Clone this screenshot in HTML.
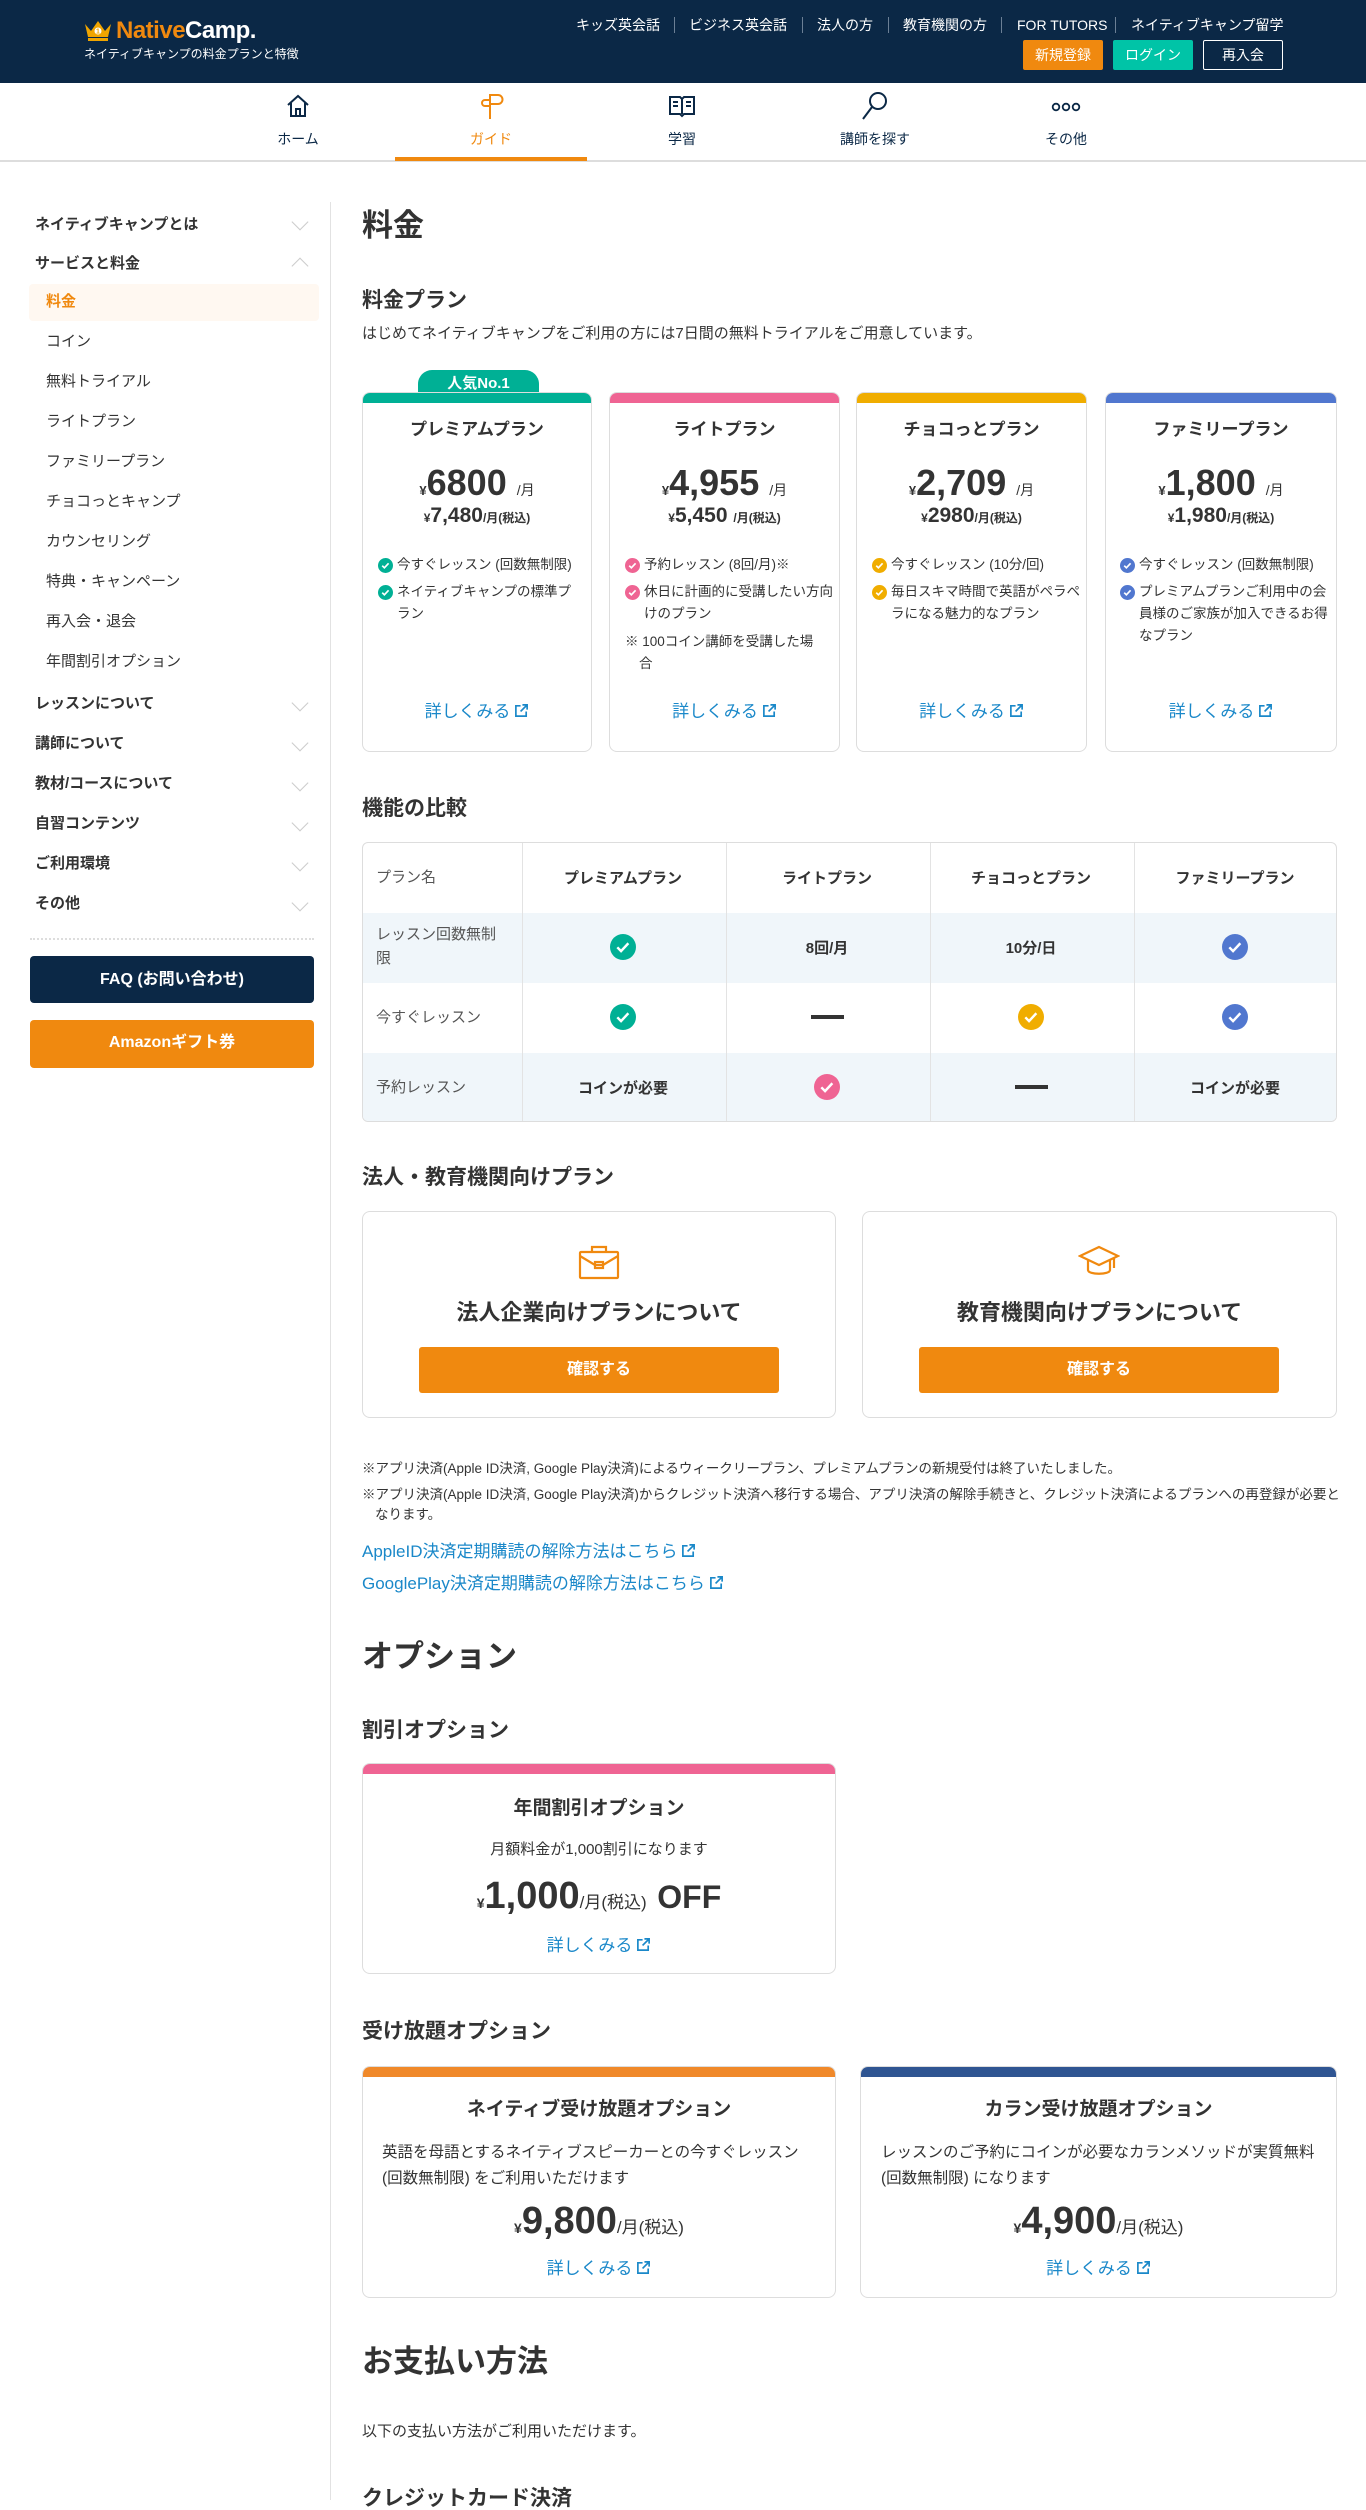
<!DOCTYPE html>
<html><head><meta charset="utf-8"><style>
*{margin:0;padding:0;box-sizing:border-box}
body{width:1366px;height:2500px;position:relative;overflow:hidden;background:#fff;font-family:"Liberation Sans","Noto Sans CJK JP",sans-serif;color:#333}
.a{position:absolute}
.t{position:absolute;line-height:1;white-space:nowrap}
.c{text-align:center}
.b{font-weight:bold}
.hdr{left:0;top:0;width:1366px;height:83px;background:#0b2846}
.nav{left:0;top:83px;width:1366px;height:79px;background:#fff;border-bottom:2px solid #ddd}
.toplink{color:#fff;font-size:14px;top:18px}
.sep{position:absolute;top:17px;width:1px;height:16px;background:#6b7f95}
.btn{position:absolute;top:40px;height:30px;font-size:14px;color:#fff;text-align:center;line-height:30px;border-radius:2px}
.navl{font-size:14px;color:#0b2846;top:132px;width:120px;text-align:center}
.sb{font-size:15px;font-weight:bold;color:#333;left:35px}
.ss{font-size:15px;color:#333;left:46px}
.chev{position:absolute;left:294px;width:12px;height:12px;border-right:1.5px solid #ccc;border-bottom:1.5px solid #ccc;transform:rotate(45deg)}
.card{position:absolute;border:1px solid #ddd;border-radius:8px;background:#fff;overflow:hidden}
.bar{position:absolute;left:0;top:0;width:100%;height:10px}
.link{color:#1a88c9}
.ext{display:inline-block;width:15px;height:15px;vertical-align:-1px;margin-left:4px}
.feat{position:absolute;font-size:13.5px;line-height:22px;color:#333}
.feat svg{position:absolute;left:-19px;top:4px}
.h1{font-size:31px;font-weight:bold;color:#333}
.h2{font-size:21px;font-weight:bold;color:#333}
.cell{position:absolute;display:flex;align-items:center;justify-content:center;font-size:15px;font-weight:bold;color:#333}
.obtn{position:absolute;background:#f0890f;color:#fff;font-weight:bold;font-size:16px;text-align:center;border-radius:3px}
</style></head><body>

<div class="a hdr"></div>
<svg class="a" style="left:83px;top:20px" width="30" height="22" viewBox="0 0 30 22"><path d="M2 4l6 7 7-10 7 10 6-7-3 13H5z" fill="#f0a500"/><rect x="5" y="18" width="20" height="3" fill="#f0a500"/><circle cx="15" cy="11" r="3.5" fill="#fff"/><text x="15" y="13.5" font-size="7" text-anchor="middle" fill="#f0a500" font-family="Liberation Sans" font-weight="bold">1</text></svg>
<div class="t b" style="left:116px;top:19px;font-size:24px;letter-spacing:-0.5px"><span style="color:#f0890f">Native</span><span style="color:#fff">Camp.</span></div>
<div class="t" style="left:84px;top:48px;font-size:12px;color:#fff">ネイティブキャンプの料金プランと特徴</div>

<div class="t toplink" style="left:576px">キッズ英会話</div><div class="sep" style="left:674px"></div>
<div class="t toplink" style="left:689px">ビジネス英会話</div><div class="sep" style="left:802px"></div>
<div class="t toplink" style="left:817px">法人の方</div><div class="sep" style="left:888px"></div>
<div class="t toplink" style="left:903px">教育機関の方</div><div class="sep" style="left:1001px"></div>
<div class="t toplink" style="left:1017px">FOR TUTORS</div><div class="sep" style="left:1115px"></div>
<div class="t toplink" style="left:1131px">ネイティブキャンプ留学</div>
<div class="btn" style="left:1023px;width:80px;background:#f0890f">新規登録</div>
<div class="btn" style="left:1113px;width:80px;background:#00c4a7">ログイン</div>
<div class="btn" style="left:1203px;width:80px;border:1px solid #fff;line-height:28px">再入会</div>

<div class="a nav"></div>
<div class="a" style="left:395px;top:157px;width:192px;height:4px;background:#f0890f"></div>
<svg class="a" style="left:284px;top:92px" width="28" height="28" viewBox="0 0 28 28" fill="none" stroke="#0b2846" stroke-width="2"><path d="M4 13L14 4l10 9M7 11v13h14V11M12 24v-7h4v7"/></svg>
<svg class="a" style="left:478px;top:91px" width="28" height="30" viewBox="0 0 28 30" fill="none" stroke="#f0890f" stroke-width="2"><path d="M12 3v25M12 4h8a4 4 0 010 9h-8M12 9H7a3 3 0 000 6h5"/></svg>
<svg class="a" style="left:668px;top:94px" width="28" height="24" viewBox="0 0 28 24" fill="none" stroke="#0b2846" stroke-width="2"><path d="M2 3h10l2 2 2-2h10v17H16l-2 2-2-2H2zM14 5v15M5 8h5M5 12h5M18 8h5M18 12h5"/></svg>
<svg class="a" style="left:860px;top:90px" width="30" height="32" viewBox="0 0 30 32" fill="none" stroke="#0b2846" stroke-width="2"><circle cx="18" cy="11" r="8"/><path d="M12 17L3 29"/></svg>
<svg class="a" style="left:1051px;top:102px" width="30" height="10" viewBox="0 0 30 10" fill="none" stroke="#0b2846" stroke-width="1.8"><circle cx="5" cy="5" r="3.3"/><circle cx="15" cy="5" r="3.3"/><circle cx="25" cy="5" r="3.3"/></svg>
<div class="t navl" style="left:238px">ホーム</div>
<div class="t navl" style="left:431px;color:#f0890f">ガイド</div>
<div class="t navl" style="left:622px">学習</div>
<div class="t navl" style="left:815px">講師を探す</div>
<div class="t navl" style="left:1006px">その他</div>

<!-- sidebar -->
<div class="a" style="left:330px;top:202px;width:1px;height:2298px;background:#e2e2e2"></div>
<div class="t sb" style="top:217px">ネイティブキャンプとは</div><div class="chev" style="top:216px"></div>
<div class="t sb" style="top:256px">サービスと料金</div><div class="chev" style="top:260px;transform:rotate(225deg)"></div>
<div class="a" style="left:29px;top:284px;width:290px;height:37px;background:#fff8f1;border-radius:4px"></div>
<div class="t ss" style="top:294px;color:#f0890f;font-weight:bold">料金</div>
<div class="t ss" style="top:334px">コイン</div>
<div class="t ss" style="top:374px">無料トライアル</div>
<div class="t ss" style="top:414px">ライトプラン</div>
<div class="t ss" style="top:454px">ファミリープラン</div>
<div class="t ss" style="top:494px">チョコっとキャンプ</div>
<div class="t ss" style="top:534px">カウンセリング</div>
<div class="t ss" style="top:574px">特典・キャンペーン</div>
<div class="t ss" style="top:614px">再入会・退会</div>
<div class="t ss" style="top:654px">年間割引オプション</div>
<div class="t sb" style="top:696px">レッスンについて</div><div class="chev" style="top:697px"></div>
<div class="t sb" style="top:736px">講師について</div><div class="chev" style="top:737px"></div>
<div class="t sb" style="top:776px">教材/コースについて</div><div class="chev" style="top:777px"></div>
<div class="t sb" style="top:816px">自習コンテンツ</div><div class="chev" style="top:817px"></div>
<div class="t sb" style="top:856px">ご利用環境</div><div class="chev" style="top:857px"></div>
<div class="t sb" style="top:896px">その他</div><div class="chev" style="top:897px"></div>
<div class="a" style="left:30px;top:938px;width:284px;border-top:2px dotted #ddd"></div>
<div class="a b c" style="left:30px;top:956px;width:284px;height:47px;background:#0b2846;color:#fff;border-radius:4px;font-size:16px;line-height:47px">FAQ (お問い合わせ)</div>
<div class="a b c" style="left:30px;top:1020px;width:284px;height:48px;background:#f0890f;color:#fff;border-radius:4px;font-size:16px;line-height:46px">Amazonギフト券</div>

<!-- main -->
<div class="t h1" style="left:362px;top:210px">料金</div>
<div class="t h2" style="left:362px;top:290px">料金プラン</div>
<div class="t" style="left:362px;top:326px;font-size:15px">はじめてネイティブキャンプをご利用の方には7日間の無料トライアルをご用意しています。</div>

<div class="a b c" style="left:418px;top:370px;width:121px;height:30px;background:#00b095;color:#fff;border-radius:14px 14px 0 0;font-size:15px;line-height:28px">人気No.1</div>

<div class="card" style="left:362px;top:392px;width:230px;height:360px"><div class="bar" style="background:#00b095"></div></div>
<div class="card" style="left:609px;top:392px;width:231px;height:360px"><div class="bar" style="background:#ef6493"></div></div>
<div class="card" style="left:856px;top:392px;width:231px;height:360px"><div class="bar" style="background:#f0ad00"></div></div>
<div class="card" style="left:1105px;top:392px;width:232px;height:360px"><div class="bar" style="background:#5177cf"></div></div>

<div class="t b c" style="left:362px;top:421px;width:230px;font-size:17px">プレミアムプラン</div>
<div class="t b c" style="left:609px;top:421px;width:231px;font-size:17px">ライトプラン</div>
<div class="t b c" style="left:856px;top:421px;width:231px;font-size:17px">チョコっとプラン</div>
<div class="t b c" style="left:1105px;top:421px;width:232px;font-size:17px">ファミリープラン</div>

<div class="t b c" style="left:362px;top:465px;width:230px;font-size:36px"><span style="font-size:13px">¥</span>6800 <span style="font-size:14px;font-weight:normal">/月</span></div>
<div class="t b c" style="left:609px;top:465px;width:231px;font-size:36px"><span style="font-size:13px">¥</span>4,955 <span style="font-size:14px;font-weight:normal">/月</span></div>
<div class="t b c" style="left:856px;top:465px;width:231px;font-size:36px"><span style="font-size:13px">¥</span>2,709 <span style="font-size:14px;font-weight:normal">/月</span></div>
<div class="t b c" style="left:1105px;top:465px;width:232px;font-size:36px"><span style="font-size:13px">¥</span>1,800 <span style="font-size:14px;font-weight:normal">/月</span></div>

<div class="t b c" style="left:362px;top:505px;width:230px;font-size:21px"><span style="font-size:12px">¥</span>7,480<span style="font-size:12px">/月(税込)</span></div>
<div class="t b c" style="left:609px;top:505px;width:231px;font-size:21px"><span style="font-size:12px">¥</span>5,450 <span style="font-size:12px">/月(税込)</span></div>
<div class="t b c" style="left:856px;top:505px;width:231px;font-size:21px"><span style="font-size:12px">¥</span>2980<span style="font-size:12px">/月(税込)</span></div>
<div class="t b c" style="left:1105px;top:505px;width:232px;font-size:21px"><span style="font-size:12px">¥</span>1,980<span style="font-size:12px">/月(税込)</span></div>

<div class="feat" style="left:397px;top:554px;width:185px"><svg width="15" height="15" viewBox="0 0 16 16"><circle cx="8" cy="8" r="8" fill="#00b095"/><path d="M4.5 8.2l2.3 2.3 4.5-4.8" stroke="#fff" stroke-width="1.8" fill="none"/></svg>今すぐレッスン (回数無制限)</div>
<div class="feat" style="left:397px;top:581px;width:185px"><svg width="15" height="15" viewBox="0 0 16 16"><circle cx="8" cy="8" r="8" fill="#00b095"/><path d="M4.5 8.2l2.3 2.3 4.5-4.8" stroke="#fff" stroke-width="1.8" fill="none"/></svg>ネイティブキャンプの標準プラン</div>
<div class="feat" style="left:644px;top:554px;width:190px"><svg width="15" height="15" viewBox="0 0 16 16"><circle cx="8" cy="8" r="8" fill="#ef6493"/><path d="M4.5 8.2l2.3 2.3 4.5-4.8" stroke="#fff" stroke-width="1.8" fill="none"/></svg>予約レッスン (8回/月)※</div>
<div class="feat" style="left:644px;top:581px;width:190px"><svg width="15" height="15" viewBox="0 0 16 16"><circle cx="8" cy="8" r="8" fill="#ef6493"/><path d="M4.5 8.2l2.3 2.3 4.5-4.8" stroke="#fff" stroke-width="1.8" fill="none"/></svg>休日に計画的に受講したい方向けのプラン</div>
<div class="feat" style="left:625px;top:631px;width:200px;padding-left:14px;text-indent:-14px">※ 100コイン講師を受講した場合</div>
<div class="feat" style="left:891px;top:554px;width:190px"><svg width="15" height="15" viewBox="0 0 16 16"><circle cx="8" cy="8" r="8" fill="#f0ad00"/><path d="M4.5 8.2l2.3 2.3 4.5-4.8" stroke="#fff" stroke-width="1.8" fill="none"/></svg>今すぐレッスン (10分/回)</div>
<div class="feat" style="left:891px;top:581px;width:190px"><svg width="15" height="15" viewBox="0 0 16 16"><circle cx="8" cy="8" r="8" fill="#f0ad00"/><path d="M4.5 8.2l2.3 2.3 4.5-4.8" stroke="#fff" stroke-width="1.8" fill="none"/></svg>毎日スキマ時間で英語がペラペラになる魅力的なプラン</div>
<div class="feat" style="left:1139px;top:554px;width:192px"><svg width="15" height="15" viewBox="0 0 16 16"><circle cx="8" cy="8" r="8" fill="#5177cf"/><path d="M4.5 8.2l2.3 2.3 4.5-4.8" stroke="#fff" stroke-width="1.8" fill="none"/></svg>今すぐレッスン (回数無制限)</div>
<div class="feat" style="left:1139px;top:581px;width:192px"><svg width="15" height="15" viewBox="0 0 16 16"><circle cx="8" cy="8" r="8" fill="#5177cf"/><path d="M4.5 8.2l2.3 2.3 4.5-4.8" stroke="#fff" stroke-width="1.8" fill="none"/></svg>プレミアムプランご利用中の会員様のご家族が加入できるお得なプラン</div>

<div class="t c link" style="left:362px;top:703px;width:230px;font-size:17px">詳しくみる<svg class="ext" viewBox="0 0 16 16" fill="none" stroke="#1a88c9" stroke-width="1.8"><path d="M7 3H2v11h11V9M9 2h5v5M14 2L7 9"/></svg></div>
<div class="t c link" style="left:609px;top:703px;width:231px;font-size:17px">詳しくみる<svg class="ext" viewBox="0 0 16 16" fill="none" stroke="#1a88c9" stroke-width="1.8"><path d="M7 3H2v11h11V9M9 2h5v5M14 2L7 9"/></svg></div>
<div class="t c link" style="left:856px;top:703px;width:231px;font-size:17px">詳しくみる<svg class="ext" viewBox="0 0 16 16" fill="none" stroke="#1a88c9" stroke-width="1.8"><path d="M7 3H2v11h11V9M9 2h5v5M14 2L7 9"/></svg></div>
<div class="t c link" style="left:1105px;top:703px;width:232px;font-size:17px">詳しくみる<svg class="ext" viewBox="0 0 16 16" fill="none" stroke="#1a88c9" stroke-width="1.8"><path d="M7 3H2v11h11V9M9 2h5v5M14 2L7 9"/></svg></div>

<div class="t h2" style="left:362px;top:798px">機能の比較</div>
<div class="a" style="left:362px;top:842px;width:975px;height:280px;border:1px solid #ddd;border-radius:6px;overflow:hidden">
 <div class="a" style="left:0;top:70px;width:975px;height:70px;background:#f0f6fa"></div>
 <div class="a" style="left:0;top:210px;width:975px;height:70px;background:#f0f6fa"></div>
 <div class="a" style="left:159px;top:0;width:1px;height:280px;background:#e3e3e3"></div>
 <div class="a" style="left:363px;top:0;width:1px;height:280px;background:#e3e3e3"></div>
 <div class="a" style="left:567px;top:0;width:1px;height:280px;background:#e3e3e3"></div>
 <div class="a" style="left:771px;top:0;width:1px;height:280px;background:#e3e3e3"></div>
</div>
<div class="t" style="left:376px;top:870px;font-size:15px;color:#555">プラン名</div>
<div class="cell" style="left:521px;top:842px;width:204px;height:70px">プレミアムプラン</div>
<div class="cell" style="left:725px;top:842px;width:204px;height:70px">ライトプラン</div>
<div class="cell" style="left:929px;top:842px;width:204px;height:70px">チョコっとプラン</div>
<div class="cell" style="left:1133px;top:842px;width:204px;height:70px">ファミリープラン</div>
<div class="a" style="left:376px;top:923px;font-size:15px;color:#555;line-height:24px;width:128px">レッスン回数無制限</div>
<div class="cell" style="left:521px;top:912px;width:204px;height:70px"><svg width="26" height="26" viewBox="0 0 16 16"><circle cx="8" cy="8" r="8" fill="#00b095"/><path d="M4.5 8.2l2.3 2.3 4.5-4.8" stroke="#fff" stroke-width="1.5" fill="none"/></svg></div>
<div class="cell" style="left:725px;top:912px;width:204px;height:70px">8回/月</div>
<div class="cell" style="left:929px;top:912px;width:204px;height:70px">10分/日</div>
<div class="cell" style="left:1133px;top:912px;width:204px;height:70px"><svg width="26" height="26" viewBox="0 0 16 16"><circle cx="8" cy="8" r="8" fill="#5177cf"/><path d="M4.5 8.2l2.3 2.3 4.5-4.8" stroke="#fff" stroke-width="1.5" fill="none"/></svg></div>
<div class="t" style="left:376px;top:1010px;font-size:15px;color:#555">今すぐレッスン</div>
<div class="cell" style="left:521px;top:982px;width:204px;height:70px"><svg width="26" height="26" viewBox="0 0 16 16"><circle cx="8" cy="8" r="8" fill="#00b095"/><path d="M4.5 8.2l2.3 2.3 4.5-4.8" stroke="#fff" stroke-width="1.5" fill="none"/></svg></div>
<div class="cell" style="left:725px;top:982px;width:204px;height:70px"><div style="width:33px;height:4px;background:#333"></div></div>
<div class="cell" style="left:929px;top:982px;width:204px;height:70px"><svg width="26" height="26" viewBox="0 0 16 16"><circle cx="8" cy="8" r="8" fill="#f0ad00"/><path d="M4.5 8.2l2.3 2.3 4.5-4.8" stroke="#fff" stroke-width="1.5" fill="none"/></svg></div>
<div class="cell" style="left:1133px;top:982px;width:204px;height:70px"><svg width="26" height="26" viewBox="0 0 16 16"><circle cx="8" cy="8" r="8" fill="#5177cf"/><path d="M4.5 8.2l2.3 2.3 4.5-4.8" stroke="#fff" stroke-width="1.5" fill="none"/></svg></div>
<div class="t" style="left:376px;top:1080px;font-size:15px;color:#555">予約レッスン</div>
<div class="cell" style="left:521px;top:1052px;width:204px;height:70px">コインが必要</div>
<div class="cell" style="left:725px;top:1052px;width:204px;height:70px"><svg width="26" height="26" viewBox="0 0 16 16"><circle cx="8" cy="8" r="8" fill="#ef6493"/><path d="M4.5 8.2l2.3 2.3 4.5-4.8" stroke="#fff" stroke-width="1.5" fill="none"/></svg></div>
<div class="cell" style="left:929px;top:1052px;width:204px;height:70px"><div style="width:33px;height:4px;background:#333"></div></div>
<div class="cell" style="left:1133px;top:1052px;width:204px;height:70px">コインが必要</div>

<div class="t h2" style="left:362px;top:1167px">法人・教育機関向けプラン</div>
<div class="card" style="left:362px;top:1211px;width:474px;height:207px"></div>
<div class="card" style="left:862px;top:1211px;width:475px;height:207px"></div>
<svg class="a" style="left:578px;top:1244px" width="42" height="36" viewBox="0 0 42 36" fill="none" stroke="#f0890f" stroke-width="2.2"><rect x="2" y="8" width="38" height="26" rx="1"/><path d="M14 8V3h14v5M2 12l15 9h8l15-9"/><rect x="17" y="18" width="8" height="6"/></svg>
<svg class="a" style="left:1078px;top:1244px" width="42" height="36" viewBox="0 0 42 36" fill="none" stroke="#f0890f" stroke-width="2.2"><path d="M2 12L21 3l19 9-19 9zM10 16v10c0 5 22 5 22 0V16M36 14v10"/></svg>
<div class="t b c" style="left:362px;top:1302px;width:474px;font-size:22px">法人企業向けプランについて</div>
<div class="t b c" style="left:862px;top:1302px;width:475px;font-size:22px">教育機関向けプランについて</div>
<div class="obtn" style="left:419px;top:1347px;width:360px;height:46px;line-height:46px">確認する</div>
<div class="obtn" style="left:919px;top:1347px;width:360px;height:46px;line-height:46px">確認する</div>

<div class="t" style="left:362px;top:1462px;font-size:13.5px">※アプリ決済(Apple ID決済, Google Play決済)によるウィークリープラン、プレミアムプランの新規受付は終了いたしました。</div>
<div class="a" style="left:362px;top:1485px;width:978px;font-size:13.5px;line-height:20px;padding-left:13px;text-indent:-13px">※アプリ決済(Apple ID決済, Google Play決済)からクレジット決済へ移行する場合、アプリ決済の解除手続きと、クレジット決済によるプランへの再登録が必要となります。</div>
<div class="t link" style="left:362px;top:1543px;font-size:17px">AppleID決済定期購読の解除方法はこちら<svg class="ext" viewBox="0 0 16 16" fill="none" stroke="#1a88c9" stroke-width="1.8"><path d="M7 3H2v11h11V9M9 2h5v5M14 2L7 9"/></svg></div>
<div class="t link" style="left:362px;top:1575px;font-size:17px">GooglePlay決済定期購読の解除方法はこちら<svg class="ext" viewBox="0 0 16 16" fill="none" stroke="#1a88c9" stroke-width="1.8"><path d="M7 3H2v11h11V9M9 2h5v5M14 2L7 9"/></svg></div>

<div class="t h1" style="left:362px;top:1641px">オプション</div>
<div class="t h2" style="left:362px;top:1720px">割引オプション</div>
<div class="card" style="left:362px;top:1763px;width:474px;height:211px"><div class="bar" style="background:#ef6493"></div></div>
<div class="t b c" style="left:362px;top:1799px;width:474px;font-size:19px">年間割引オプション</div>
<div class="t c" style="left:362px;top:1842px;width:474px;font-size:15px">月額料金が1,000割引になります</div>
<div class="t b c" style="left:362px;top:1877px;width:474px;font-size:38px"><span style="font-size:14px">¥</span>1,000<span style="font-size:17px;font-weight:normal">/月(税込)</span> <span style="font-size:32px">OFF</span></div>
<div class="t c link" style="left:362px;top:1937px;width:474px;font-size:17px">詳しくみる<svg class="ext" viewBox="0 0 16 16" fill="none" stroke="#1a88c9" stroke-width="1.8"><path d="M7 3H2v11h11V9M9 2h5v5M14 2L7 9"/></svg></div>

<div class="t h2" style="left:362px;top:2021px">受け放題オプション</div>
<div class="card" style="left:362px;top:2066px;width:474px;height:232px"><div class="bar" style="background:#f0892a"></div></div>
<div class="card" style="left:860px;top:2066px;width:477px;height:232px"><div class="bar" style="background:#2f5592"></div></div>
<div class="t b c" style="left:362px;top:2100px;width:474px;font-size:19px">ネイティブ受け放題オプション</div>
<div class="t b c" style="left:860px;top:2100px;width:477px;font-size:19px">カラン受け放題オプション</div>
<div class="a" style="left:382px;top:2140px;width:440px;font-size:15.5px;line-height:26px">英語を母語とするネイティブスピーカーとの今すぐレッスン (回数無制限) をご利用いただけます</div>
<div class="a" style="left:881px;top:2140px;width:440px;font-size:15.5px;line-height:26px">レッスンのご予約にコインが必要なカランメソッドが実質無料 (回数無制限) になります</div>
<div class="t b c" style="left:362px;top:2202px;width:474px;font-size:38px"><span style="font-size:14px">¥</span>9,800<span style="font-size:17px;font-weight:normal">/月(税込)</span></div>
<div class="t b c" style="left:860px;top:2202px;width:477px;font-size:38px"><span style="font-size:14px">¥</span>4,900<span style="font-size:17px;font-weight:normal">/月(税込)</span></div>
<div class="t c link" style="left:362px;top:2260px;width:474px;font-size:17px">詳しくみる<svg class="ext" viewBox="0 0 16 16" fill="none" stroke="#1a88c9" stroke-width="1.8"><path d="M7 3H2v11h11V9M9 2h5v5M14 2L7 9"/></svg></div>
<div class="t c link" style="left:860px;top:2260px;width:477px;font-size:17px">詳しくみる<svg class="ext" viewBox="0 0 16 16" fill="none" stroke="#1a88c9" stroke-width="1.8"><path d="M7 3H2v11h11V9M9 2h5v5M14 2L7 9"/></svg></div>

<div class="t h1" style="left:362px;top:2346px">お支払い方法</div>
<div class="t" style="left:362px;top:2424px;font-size:15px">以下の支払い方法がご利用いただけます。</div>
<div class="t h2" style="left:362px;top:2488px">クレジットカード決済</div>
</body></html>
